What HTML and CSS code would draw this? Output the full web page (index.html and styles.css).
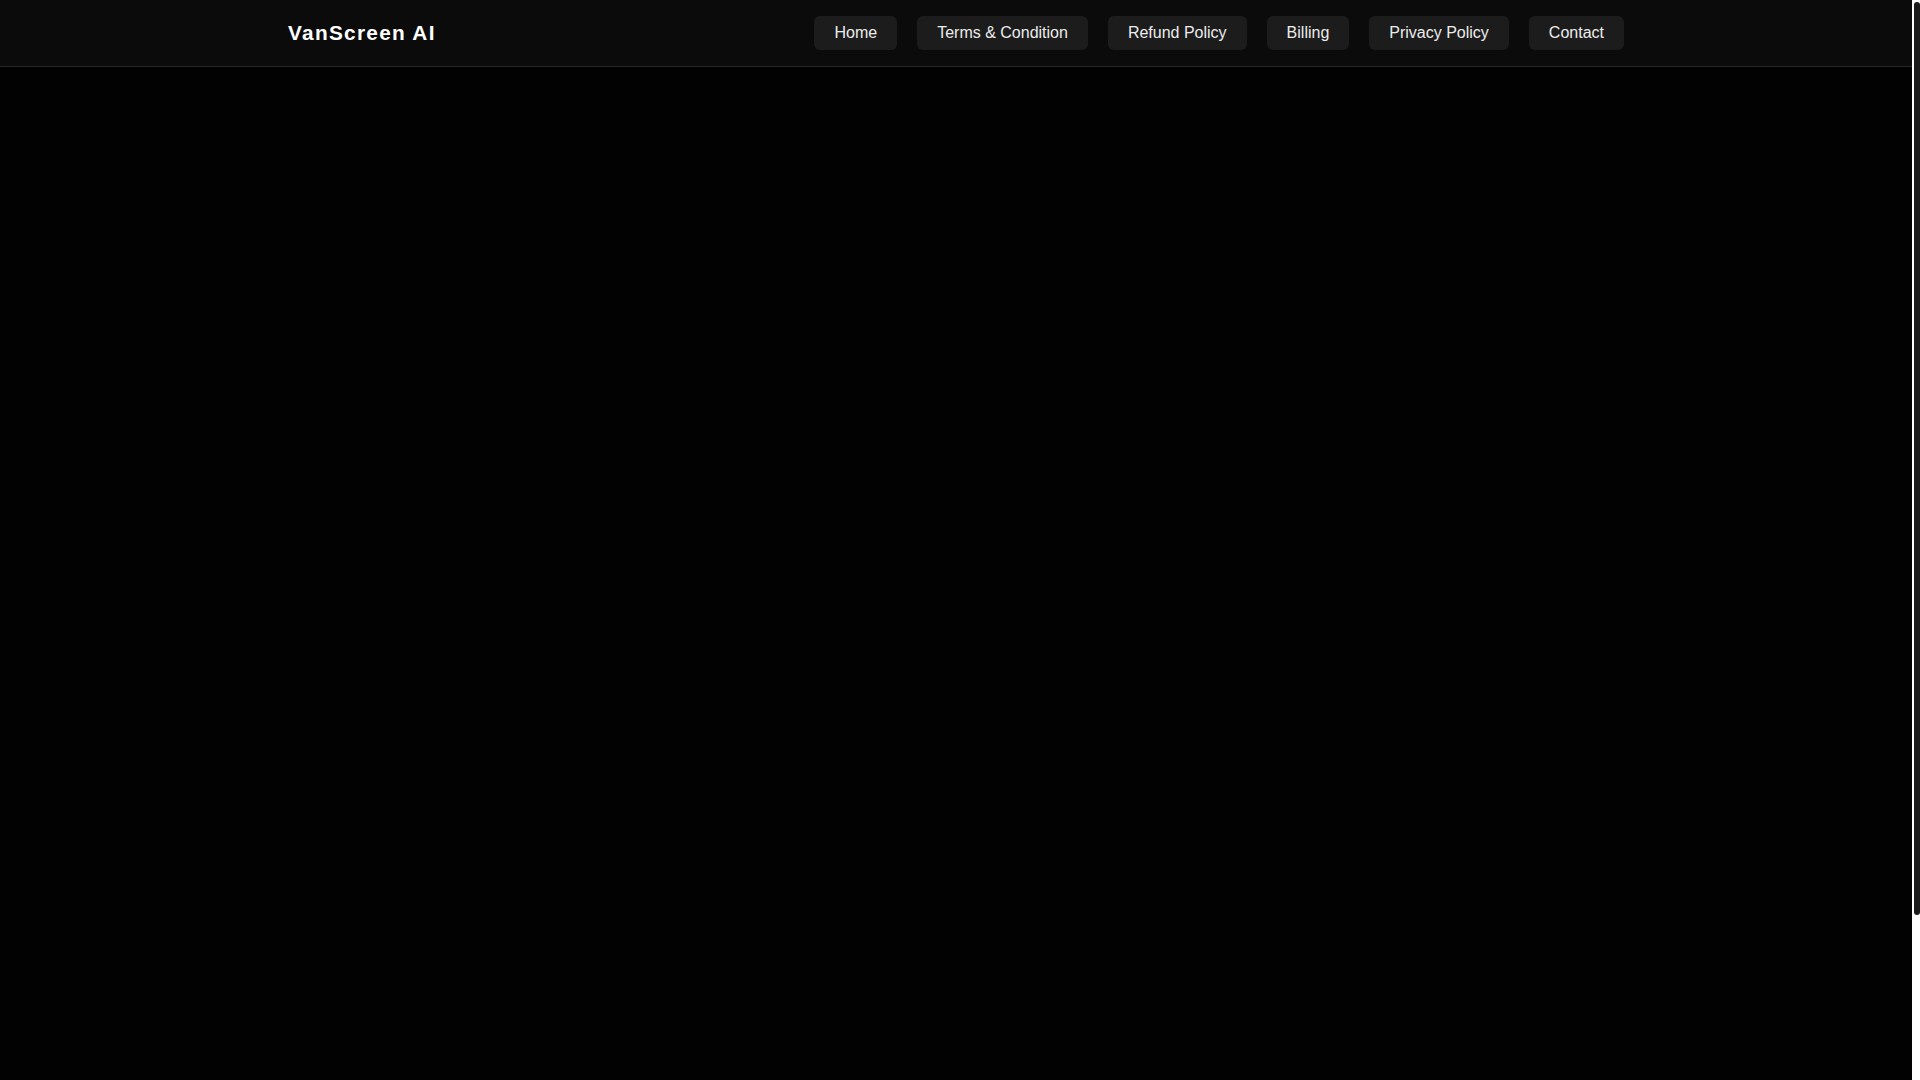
FILE: index.html
```html
<!DOCTYPE html>
<html lang="en">
<head>
<meta charset="utf-8">
<title>VanScreen AI</title>
<link rel="stylesheet" href="styles.css">
</head>
<body>
<header class="site-header">
  <div class="container header-inner">
    <a class="logo" href="#">VanScreen AI</a>
    <nav class="nav">
      <a class="nav-link" href="#">Home</a>
      <a class="nav-link" href="#">Terms &amp; Condition</a>
      <a class="nav-link" href="#">Refund Policy</a>
      <a class="nav-link" href="#">Billing</a>
      <a class="nav-link" href="#">Privacy Policy</a>
      <a class="nav-link" href="#">Contact</a>
    </nav>
  </div>
</header>
<main class="main"></main>
<div class="scroll-rail" aria-hidden="true"><div class="scroll-thumb"></div></div>
</body>
</html>
```
FILE: styles.css
```css
*, *::before, *::after {
  box-sizing: border-box;
}
html {
  background: #020202;
}
body {
  margin: 0;
  padding-right: 8px;
  background: #020202;
  color: #ffffff;
  font-family: "Liberation Sans", Arial, sans-serif;
}
.site-header {
  background: #0b0b0b;
  border-bottom: 1px solid #262626;
}
.container {
  max-width: 1400px;
  margin: 0 auto;
  padding: 0 32px;
}
.header-inner {
  display: flex;
  align-items: center;
  justify-content: space-between;
  height: 66px;
}
.logo {
  color: #ffffff;
  text-decoration: none;
  font-weight: 700;
  font-size: 20.8px;
  letter-spacing: 1.3px;
}
.nav {
  display: flex;
  gap: 20px;
}
.nav-link {
  display: block;
  background: #1c1c1c;
  color: #ececec;
  text-decoration: none;
  font-size: 16px;
  line-height: 18px;
  padding: 8px 20px;
  border-radius: 6px;
}
.main {
  height: 1210px;
  background: #020202;
}
.scroll-rail {
  position: fixed;
  top: 0;
  right: 0;
  width: 8px;
  height: 100vh;
  background: #ffffff;
  padding: 2px 0 0 2px;
}
.scroll-thumb {
  width: 6px;
  height: 913px;
  background: #1b1b1b;
  border-radius: 3px;
}
```
